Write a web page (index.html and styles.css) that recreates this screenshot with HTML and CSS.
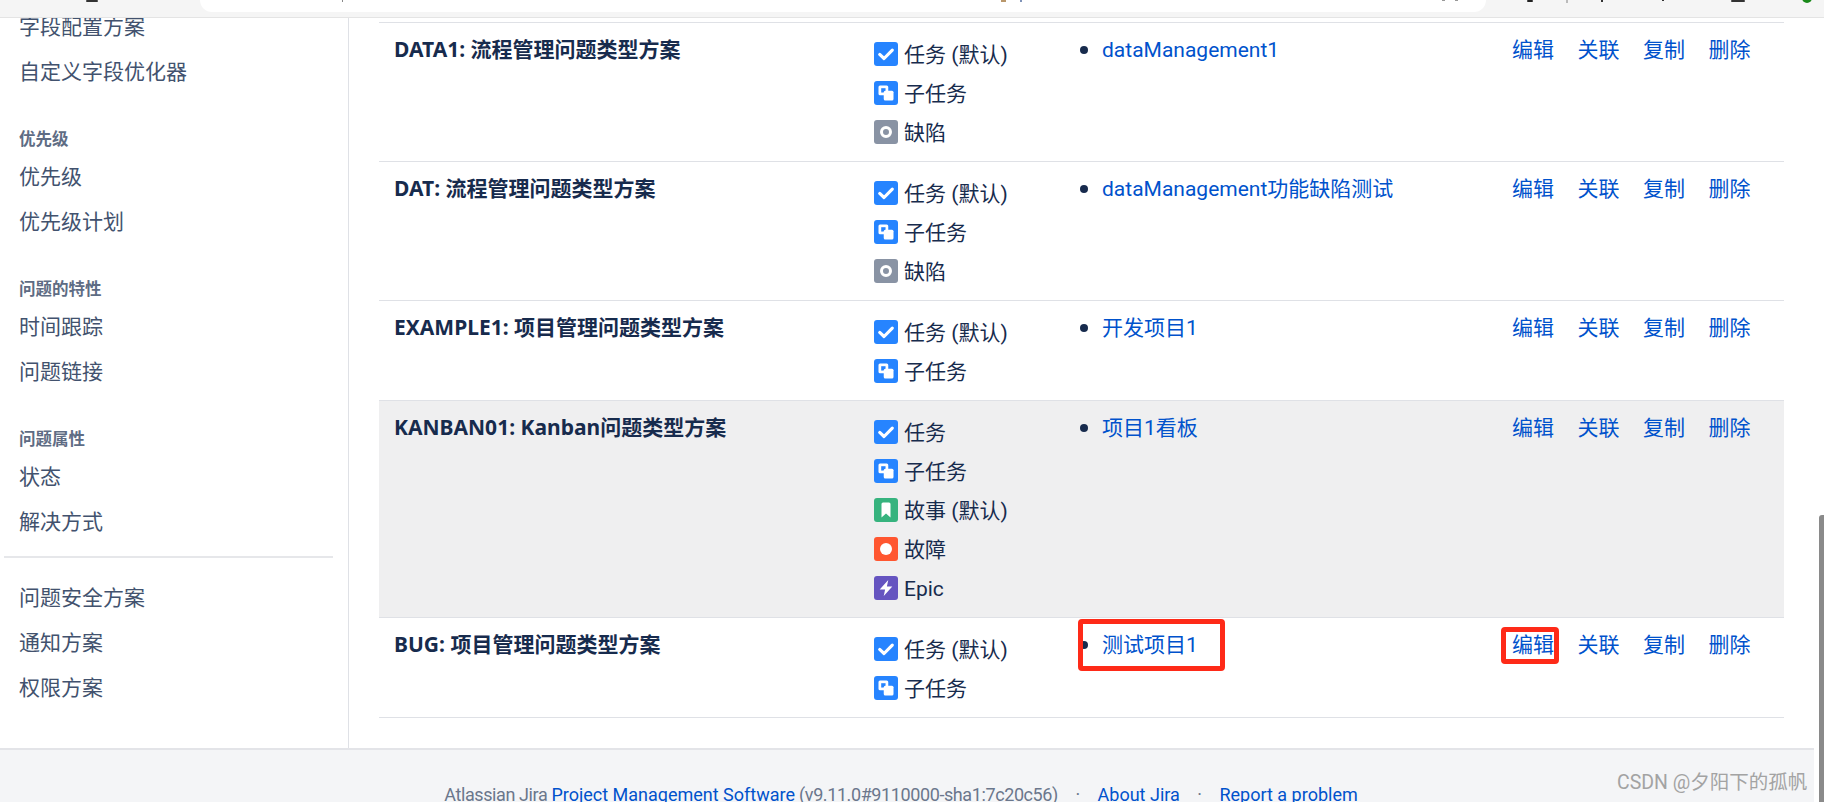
FILE: index.html
```html
<!DOCTYPE html>
<html lang="zh-CN">
<head>
<meta charset="utf-8">
<title>问题类型方案</title>
<link rel="stylesheet" href="styles.css">
</head>
<body>
<svg width="0" height="0" class="defs">
  <defs>
    <symbol id="i-task" viewBox="0 0 16 16"><rect width="16" height="16" rx="2" fill="#2684ff"/><path d="M3.8 8.3l2.9 2.7L12.2 5.4" fill="none" stroke="#fff" stroke-width="2.1" stroke-linecap="round" stroke-linejoin="round"/></symbol>
    <symbol id="i-sub" viewBox="0 0 16 16"><rect width="16" height="16" rx="2" fill="#2684ff"/><rect x="3" y="3" width="6.5" height="6.5" rx="1" fill="#fff"/><rect x="4.8" y="4.8" width="2.9" height="2.9" fill="#2684ff"/><rect x="6.5" y="6.5" width="6.5" height="6.5" rx="1" fill="#fff"/></symbol>
    <symbol id="i-defect" viewBox="0 0 16 16"><rect width="16" height="16" rx="2" fill="#8993a4"/><circle cx="8" cy="8" r="3" fill="none" stroke="#fff" stroke-width="2"/></symbol>
    <symbol id="i-story" viewBox="0 0 16 16"><rect width="16" height="16" rx="2" fill="#36b37e"/><path d="M5 4a1 1 0 0 1 1-1h4a1 1 0 0 1 1 1v9l-3-2.6L5 13z" fill="#fff"/></symbol>
    <symbol id="i-bug" viewBox="0 0 16 16"><rect width="16" height="16" rx="2" fill="#ff5630"/><circle cx="8" cy="8" r="4" fill="#fff"/></symbol>
    <symbol id="i-epic" viewBox="0 0 16 16"><rect width="16" height="16" rx="2" fill="#6554c0"/><path d="M9.5 2.7L3.8 9h3.6l-.9 4.3L12.2 7H8.6z" fill="#fff"/></symbol>
  </defs>
</svg>

<header class="chrome">
  <div class="address"></div>
  <svg class="chrome-marks" width="1824" height="18" viewBox="0 0 1824 18">
    <rect x="86" y="0" width="12" height="2" rx="1" fill="#333"/>
    <rect x="342" y="0" width="1" height="2" fill="#888"/>
    <rect x="1001" y="0" width="5" height="2" fill="#b9976b"/>
    <rect x="1020" y="0" width="2" height="2" fill="#7f93b8"/>
    <rect x="1442" y="0" width="3" height="1" fill="#999"/>
    <rect x="1455" y="0" width="3" height="1" fill="#999"/>
    <rect x="1527" y="0" width="6" height="2" rx="1" fill="#222"/>
    <rect x="1566" y="0" width="2" height="3" fill="#bbb"/>
    <rect x="1601" y="0" width="2" height="2" fill="#333"/>
    <rect x="1662" y="0" width="2" height="1" fill="#333"/>
    <rect x="1731" y="0" width="14" height="2" rx="1" fill="#333"/>
    <circle cx="1807" cy="-2" r="5" fill="#1a8a1a"/>
  </svg>
</header>

<div class="viewport">
  <div class="page">
    <main class="main">
      <nav class="sidebar">
        <ul class="nav-list">
          <li>字段配置方案</li>
          <li>自定义字段优化器</li>
        </ul>
        <h3 class="nav-head">优先级</h3>
        <ul class="nav-list">
          <li>优先级</li>
          <li>优先级计划</li>
        </ul>
        <h3 class="nav-head">问题的特性</h3>
        <ul class="nav-list">
          <li>时间跟踪</li>
          <li>问题链接</li>
        </ul>
        <h3 class="nav-head">问题属性</h3>
        <ul class="nav-list">
          <li>状态</li>
          <li>解决方式</li>
        </ul>
        <hr class="nav-rule">
        <ul class="nav-list">
          <li>问题安全方案</li>
          <li>通知方案</li>
          <li>权限方案</li>
        </ul>
      </nav>

      <section class="content">
        <div class="scheme-table">
          <div class="row">
            <div class="name">DATA1: 流程管理问题类型方案</div>
            <ul class="types">
              <li><svg class="ic"><use href="#i-task"/></svg><span>任务 (默认)</span></li>
              <li><svg class="ic"><use href="#i-sub"/></svg><span>子任务</span></li>
              <li><svg class="ic"><use href="#i-defect"/></svg><span>缺陷</span></li>
            </ul>
            <ul class="projects"><li><a href="#">dataManagement1</a></li></ul>
            <div class="ops"><a href="#">编辑</a><a href="#">关联</a><a href="#">复制</a><a href="#">删除</a></div>
          </div>
          <div class="row">
            <div class="name">DAT: 流程管理问题类型方案</div>
            <ul class="types">
              <li><svg class="ic"><use href="#i-task"/></svg><span>任务 (默认)</span></li>
              <li><svg class="ic"><use href="#i-sub"/></svg><span>子任务</span></li>
              <li><svg class="ic"><use href="#i-defect"/></svg><span>缺陷</span></li>
            </ul>
            <ul class="projects"><li><a href="#">dataManagement功能缺陷测试</a></li></ul>
            <div class="ops"><a href="#">编辑</a><a href="#">关联</a><a href="#">复制</a><a href="#">删除</a></div>
          </div>
          <div class="row">
            <div class="name">EXAMPLE1: 项目管理问题类型方案</div>
            <ul class="types">
              <li><svg class="ic"><use href="#i-task"/></svg><span>任务 (默认)</span></li>
              <li><svg class="ic"><use href="#i-sub"/></svg><span>子任务</span></li>
            </ul>
            <ul class="projects"><li><a href="#">开发项目1</a></li></ul>
            <div class="ops"><a href="#">编辑</a><a href="#">关联</a><a href="#">复制</a><a href="#">删除</a></div>
          </div>
          <div class="row row-hover">
            <div class="name">KANBAN01: Kanban问题类型方案</div>
            <ul class="types">
              <li><svg class="ic"><use href="#i-task"/></svg><span>任务</span></li>
              <li><svg class="ic"><use href="#i-sub"/></svg><span>子任务</span></li>
              <li><svg class="ic"><use href="#i-story"/></svg><span>故事 (默认)</span></li>
              <li><svg class="ic"><use href="#i-bug"/></svg><span>故障</span></li>
              <li><svg class="ic"><use href="#i-epic"/></svg><span>Epic</span></li>
            </ul>
            <ul class="projects"><li><a href="#">项目1看板</a></li></ul>
            <div class="ops"><a href="#">编辑</a><a href="#">关联</a><a href="#">复制</a><a href="#">删除</a></div>
          </div>
          <div class="row">
            <div class="name">BUG: 项目管理问题类型方案</div>
            <ul class="types">
              <li><svg class="ic"><use href="#i-task"/></svg><span>任务 (默认)</span></li>
              <li><svg class="ic"><use href="#i-sub"/></svg><span>子任务</span></li>
            </ul>
            <ul class="projects"><li><a href="#">测试项目1</a></li></ul>
            <div class="ops"><a href="#">编辑</a><a href="#">关联</a><a href="#">复制</a><a href="#">删除</a></div>
          </div>
        </div>
      </section>
    </main>

    <footer class="footer">
      <span class="footer-note">Atlassian Jira <a href="#">Project Management Software</a> (v9.11.0#9110000-sha1:7c20c56)</span>
      <span class="dot">·</span>
      <a href="#">About Jira</a>
      <span class="dot">·</span>
      <a href="#">Report a problem</a>
    </footer>
  </div>
  <div class="scrollbar"><div class="thumb"></div></div>

  <div class="callout callout-project"></div>
  <div class="callout callout-edit"></div>
  <div class="watermark">CSDN @夕阳下的孤帆</div>
</div>
</body>
</html>
```

FILE: styles.css
```css
* { box-sizing: border-box; }

html, body {
  margin: 0;
  height: 802px;
  overflow: hidden;
  background: #fff;
}

body {
  font-family: Roboto, "Noto Sans CJK SC", sans-serif;
  font-size: 21px;
  line-height: 30px;
  color: #172b4d;
  display: flex;
  flex-direction: column;
}

.defs { position: absolute; }

a { color: #0052cc; text-decoration: none; }
ul { list-style: none; margin: 0; padding: 0; }

/* browser strip */
.chrome {
  position: relative;
  height: 18px;
  flex: none;
  padding-left: 200px;
  background: #f5f5f5;
  border-bottom: 1px solid #e4e4e4;
}
.address {
  width: 1286px;
  height: 12px;
  background: #fff;
  border-radius: 0 0 18px 18px;
}
.chrome-marks { position: absolute; left: 0; top: 0; }

/* page */
.viewport {
  position: relative;
  flex: 1;
  min-height: 0;
  display: flex;
  overflow: hidden;
}
.page {
  width: 1814px;
  flex: none;
  display: flex;
  flex-direction: column;
}
.main {
  height: 730px;
  flex: none;
  display: flex;
}

/* sidebar */
.sidebar {
  width: 349px;
  flex: none;
  padding: 0 15px 0 19px;
  margin-top: -6px;
  border-right: 1px solid #dfe1e6;
  color: #42526e;
}
.nav-list li { height: 30px; margin-bottom: 15px; }
.nav-head {
  margin: 0;
  padding-top: 26px;
  height: 60px;
  font-size: 16.5px;
  line-height: 24px;
  font-weight: 700;
  color: #5e6c84;
}
.nav-rule {
  margin: 19px 0 25px -15px;
  width: 329px;
  border: 0;
  border-top: 2px solid #e6e7ea;
}

/* table */
.content {
  flex: 1;
  padding: 4px 30px 0;
}
.scheme-table { border-top: 1px solid #dfe1e6; }
.row {
  display: grid;
  grid-template-columns: 480px 199px 439px 1fr;
  padding: 12px 0 9px 15px;
  border-bottom: 1px solid #dfe1e6;
}
.row-hover { background: #efeff0; }
.name {
  margin-top: -1px;
  font-family: "Noto Sans", "Noto Sans CJK SC", sans-serif;
  font-weight: 700;
}

.types { margin-top: -1px; margin-bottom: 1px; }
.types li {
  height: 39px;
  display: flex;
  align-items: center;
  gap: 6px;
}
.types li span { position: relative; top: 1px; }
.ic { width: 24px; height: 24px; flex: none; }

.projects { padding-left: 29px; }
.projects li { position: relative; }
.projects li::before {
  content: "";
  position: absolute;
  left: -22px;
  top: 11px;
  width: 8px;
  height: 8px;
  border-radius: 50%;
  background: #172b4d;
}

.ops { display: flex; gap: 23.5px; }

/* footer */
.footer {
  flex: 1;
  background: #f4f5f7;
  border-top: 2px solid #e3e4e8;
  padding: 30px 12px 0 0;
  text-align: center;
  font-size: 18px;
  color: #6b778c;
}
.footer-note { letter-spacing: -0.4px; }
.footer-note a { letter-spacing: 0; }
.dot { margin: 0 13px; }

/* scrollbar */
.scrollbar {
  flex: 1;
  position: relative;
  background: #fff;
}
.thumb {
  position: absolute;
  right: 0;
  top: 497px;
  bottom: 0;
  width: 5px;
  background: #8a8a8a;
  border-radius: 3px 0 0 0;
}

/* annotations laid over the screenshot */
.callout {
  position: absolute;
  border: 5px solid #fe2a18;
  border-radius: 4px;
}
.callout-project { left: 1078px; top: 601px; width: 147px; height: 52px; }
.callout-edit { left: 1501px; top: 609px; width: 58px; height: 37px; }

.watermark {
  position: absolute;
  left: 1617px;
  top: 750px;
  font-size: 19.5px;
  color: #a3a3a3;
  white-space: nowrap;
}
```
